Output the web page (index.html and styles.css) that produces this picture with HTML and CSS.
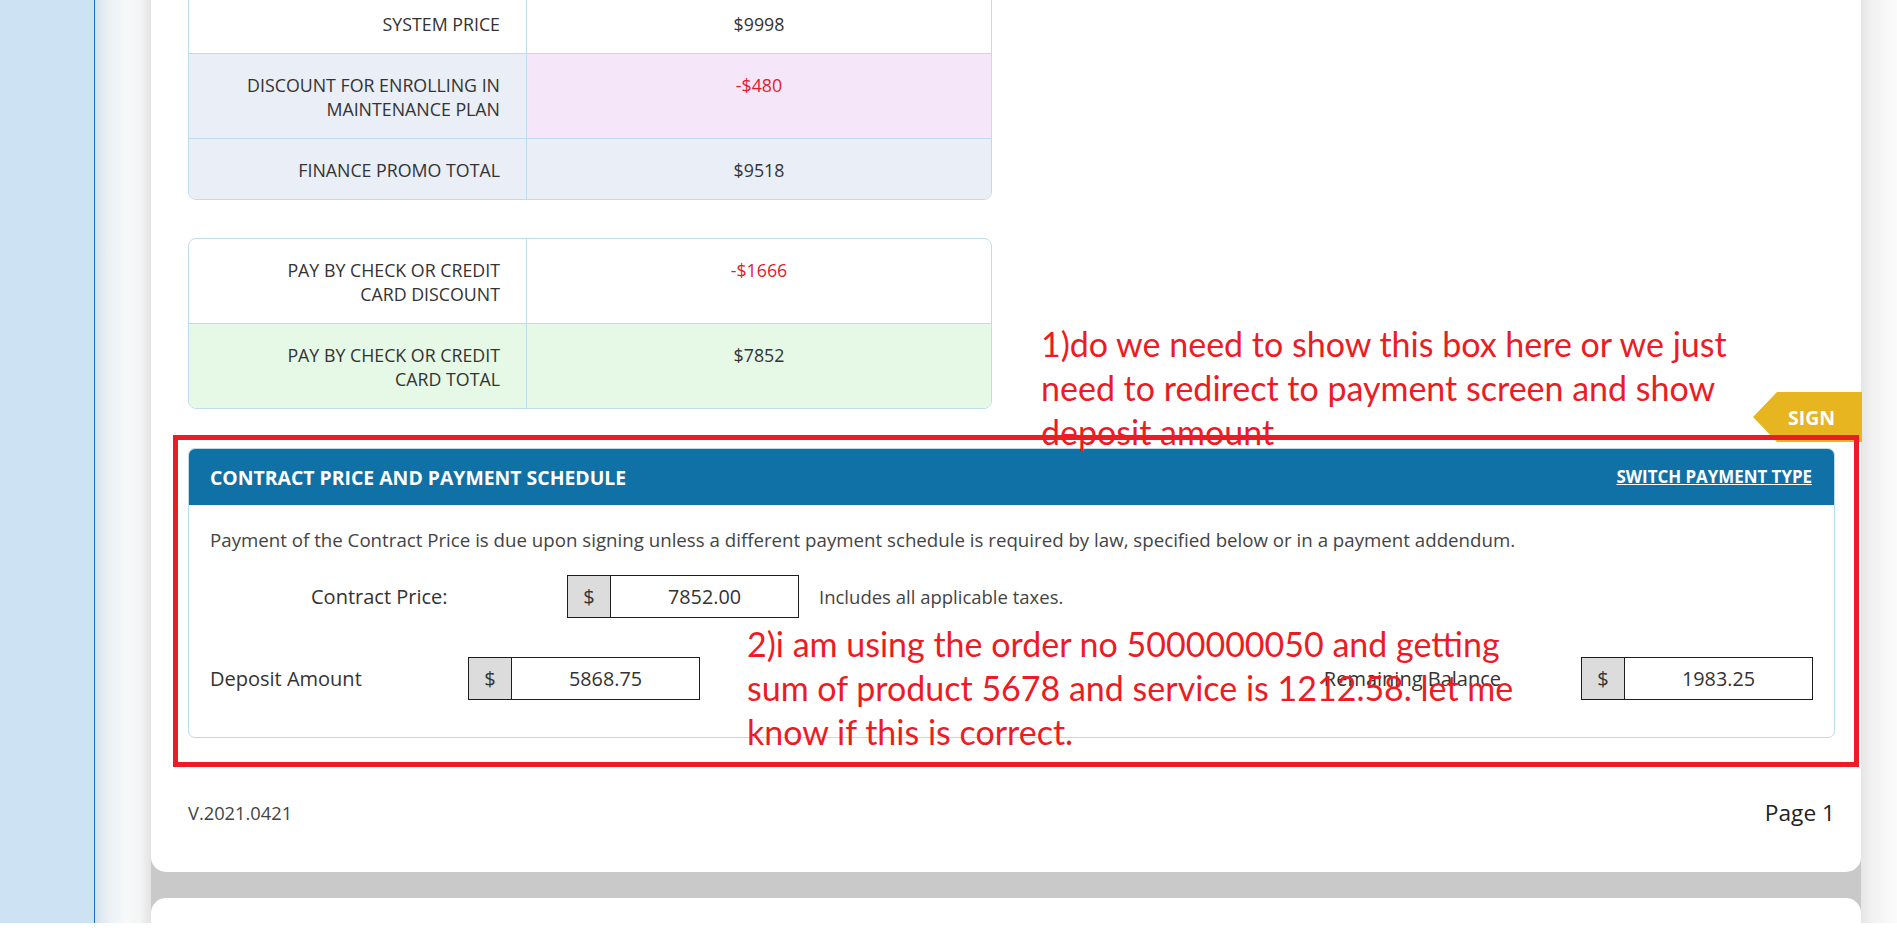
FILE: index.html
```html
<!DOCTYPE html>
<html lang="en">
<head>
<meta charset="utf-8">
<title>Contract Price and Payment Schedule</title>
<link rel="stylesheet" href="styles.css">
</head>
<body>
<div class="screen">
  <aside class="sidebar"></aside>
  <div class="gutter gutter-left"></div>
  <main class="main">
    <section class="card card-current">
      <div class="price-table">
        <div class="pt-row">
          <div class="pt-label">SYSTEM PRICE</div>
          <div class="pt-value">$9998</div>
        </div>
        <div class="pt-row row-blue">
          <div class="pt-label">DISCOUNT FOR ENROLLING IN<br>MAINTENANCE PLAN</div>
          <div class="pt-value value-pink neg">-$480</div>
        </div>
        <div class="pt-row row-blue">
          <div class="pt-label">FINANCE PROMO TOTAL</div>
          <div class="pt-value">$9518</div>
        </div>
      </div>

      <div class="price-table table-gap">
        <div class="pt-row">
          <div class="pt-label">PAY BY CHECK OR CREDIT<br>CARD DISCOUNT</div>
          <div class="pt-value neg">-$1666</div>
        </div>
        <div class="pt-row row-green">
          <div class="pt-label">PAY BY CHECK OR CREDIT<br>CARD TOTAL</div>
          <div class="pt-value">$7852</div>
        </div>
      </div>

      <section class="pay-panel">
        <header class="pay-head">
          <h2 class="pay-title">CONTRACT PRICE AND PAYMENT SCHEDULE</h2>
          <a class="pay-switch" href="#">SWITCH PAYMENT TYPE</a>
        </header>
        <div class="pay-body">
          <p class="pay-note">Payment of the Contract Price is due upon signing unless a different payment schedule is required by law, specified below or in a payment addendum.</p>
          <div class="pay-row">
            <span class="pay-label label-contract">Contract Price:</span>
            <div class="money">
              <span class="money-sym">$</span>
              <span class="money-val">7852.00</span>
            </div>
            <span class="pay-hint">Includes all applicable taxes.</span>
          </div>
          <div class="pay-row pay-row-split">
            <span class="pay-label label-deposit">Deposit Amount</span>
            <div class="money">
              <span class="money-sym">$</span>
              <span class="money-val">5868.75</span>
            </div>
            <div class="pay-right">
              <span class="pay-label label-remaining">Remaining Balance</span>
              <div class="money">
                <span class="money-sym">$</span>
                <span class="money-val">1983.25</span>
              </div>
            </div>
          </div>
        </div>
      </section>

      <footer class="card-foot">
        <span class="ver">V.2021.0421</span>
        <span class="page-no">Page 1</span>
      </footer>
    </section>
    <section class="card card-next"></section>
  </main>
  <div class="gutter gutter-right"></div>

  <div class="sign-tab">SIGN</div>
  <div class="markup-box"></div>
  <p class="markup-note note-1">1)do we need to show this box here or we just<br>need to redirect to payment screen and show<br>deposit amount</p>
  <p class="markup-note note-2">2)i am using the order no 5000000050 and getting<br>sum of product 5678 and service is 1212.58. let me<br>know if this is correct.</p>
</div>
</body>
</html>
```

FILE: styles.css
```css
* { box-sizing: border-box; }

html, body {
  margin: 0;
  padding: 0;
  background: #ffffff;
}

body {
  font-family: "Open Sans", "Noto Sans", sans-serif;
  color: #333333;
}

.screen {
  position: relative;
  display: flex;
  height: 923px;
  overflow: hidden;
}

.sidebar {
  width: 95px;
  flex: none;
  background: #cde3f3;
  border-right: 1px solid #1474bb;
}

.gutter-left {
  width: 56px;
  flex: none;
  background: linear-gradient(90deg, #d3e2ec 0%, #e9f0f4 22%, #f7f9fa 55%, #f4f5f5 80%, #e3e3e3 100%);
}

.gutter-right {
  flex: 1;
  background: linear-gradient(90deg, #e6e6e6 0%, #f1f1f1 30%, #f8f8f8 70%, #fbfbfb 100%);
}

.main {
  width: 1710px;
  flex: none;
  display: flex;
  flex-direction: column;
  gap: 26px;
  background: #c9c9c9;
}

.card {
  background: #ffffff;
}

.card-current {
  margin-top: -8px;
  padding: 0 26px 45px 37px;
  border-radius: 0 0 15px 15px;
}

.card-next {
  flex: 1;
  border-radius: 15px 15px 0 0;
}

/* ---------- price tables ---------- */
.price-table {
  width: 804px;
  border: 1px solid #bfdcec;
  border-radius: 8px;
  overflow: hidden;
  background: #ffffff;
}

.table-gap {
  margin-top: 38px;
}

.pt-row {
  display: grid;
  grid-template-columns: 338px 1fr;
}

.pt-row + .pt-row {
  border-top: 1px solid #bfdcec;
}

.pt-label,
.pt-value {
  padding: 19px 26px 17px;
  font-size: 17.8px;
  line-height: 24px;
  color: #333333;
}

.pt-label {
  text-align: right;
  border-right: 1px solid #bfdcec;
}

.pt-value {
  text-align: center;
}

.row-blue { background: #e9eef7; }
.row-green { background: #e6f9e6; }
.value-pink { background: #f6e6fa; }
.neg { color: #e21b2f; }

/* ---------- payment panel ---------- */
.pay-panel {
  margin-top: 39px;
  border: 1px solid #b9dcea;
  border-radius: 7px;
  overflow: hidden;
}

.pay-head {
  display: flex;
  align-items: center;
  justify-content: space-between;
  height: 56px;
  padding: 0 22px 0 21px;
  background: #0f71a6;
}

.pay-title {
  margin: 0;
  font-size: 19.4px;
  font-weight: 700;
  color: #ffffff;
}

.pay-switch {
  font-size: 16.9px;
  font-weight: 700;
  color: #ffffff;
  text-decoration: underline;
  margin-bottom: 2px;
}

.pay-body {
  padding: 23px 21px 37px;
}

.pay-note {
  margin: 0;
  font-size: 18.7px;
  line-height: 24px;
  color: #444444;
}

.pay-row {
  display: flex;
  align-items: center;
  margin-top: 23px;
  font-size: 20px;
  color: #333333;
}

.pay-row-split {
  margin-top: 39px;
}

.label-contract {
  width: 357px;
  padding-left: 101px;
}

.label-deposit {
  width: 258px;
}

.pay-right {
  display: flex;
  align-items: center;
  margin-left: auto;
}

.label-remaining {
  margin-right: 80px;
}

.money {
  display: flex;
  height: 43px;
  border: 1px solid #1e1e1e;
}

.money-sym {
  width: 43px;
  display: flex;
  align-items: center;
  justify-content: center;
  background: #dcdcdc;
  border-right: 1px solid #1e1e1e;
}

.money-val {
  width: 187px;
  display: flex;
  align-items: center;
  justify-content: center;
  font-size: 19.8px;
}

.pay-hint {
  margin-left: 20px;
  font-size: 18.5px;
  color: #444444;
}

/* ---------- footer ---------- */
.card-foot {
  display: flex;
  align-items: center;
  justify-content: space-between;
  height: 30px;
  margin-top: 59px;
}

.ver {
  font-size: 18.3px;
  color: #444444;
}

.page-no {
  font-size: 22.7px;
  color: #222222;
}

/* ---------- overlays ---------- */
.sign-tab {
  position: absolute;
  left: 1753px;
  top: 392px;
  width: 109px;
  height: 50px;
  padding-left: 35px;
  display: flex;
  align-items: center;
  background: #e6b520;
  clip-path: polygon(0 50%, 24px 0, 100% 0, 100% 100%, 24px 100%);
  font-size: 19.5px;
  font-weight: 700;
  color: #ffffff;
}

.markup-box {
  position: absolute;
  left: 173px;
  top: 435px;
  width: 1686px;
  height: 332px;
  border: 5px solid #ed1c24;
}

.markup-note {
  position: absolute;
  margin: 0;
  font-family: Lato, "Open Sans", sans-serif;
  font-size: 34px;
  line-height: 44px;
  color: #ed1c24;
  white-space: nowrap;
}

.note-1 {
  left: 1041px;
  top: 322px;
}

.note-2 {
  left: 747px;
  top: 622px;
}
```
